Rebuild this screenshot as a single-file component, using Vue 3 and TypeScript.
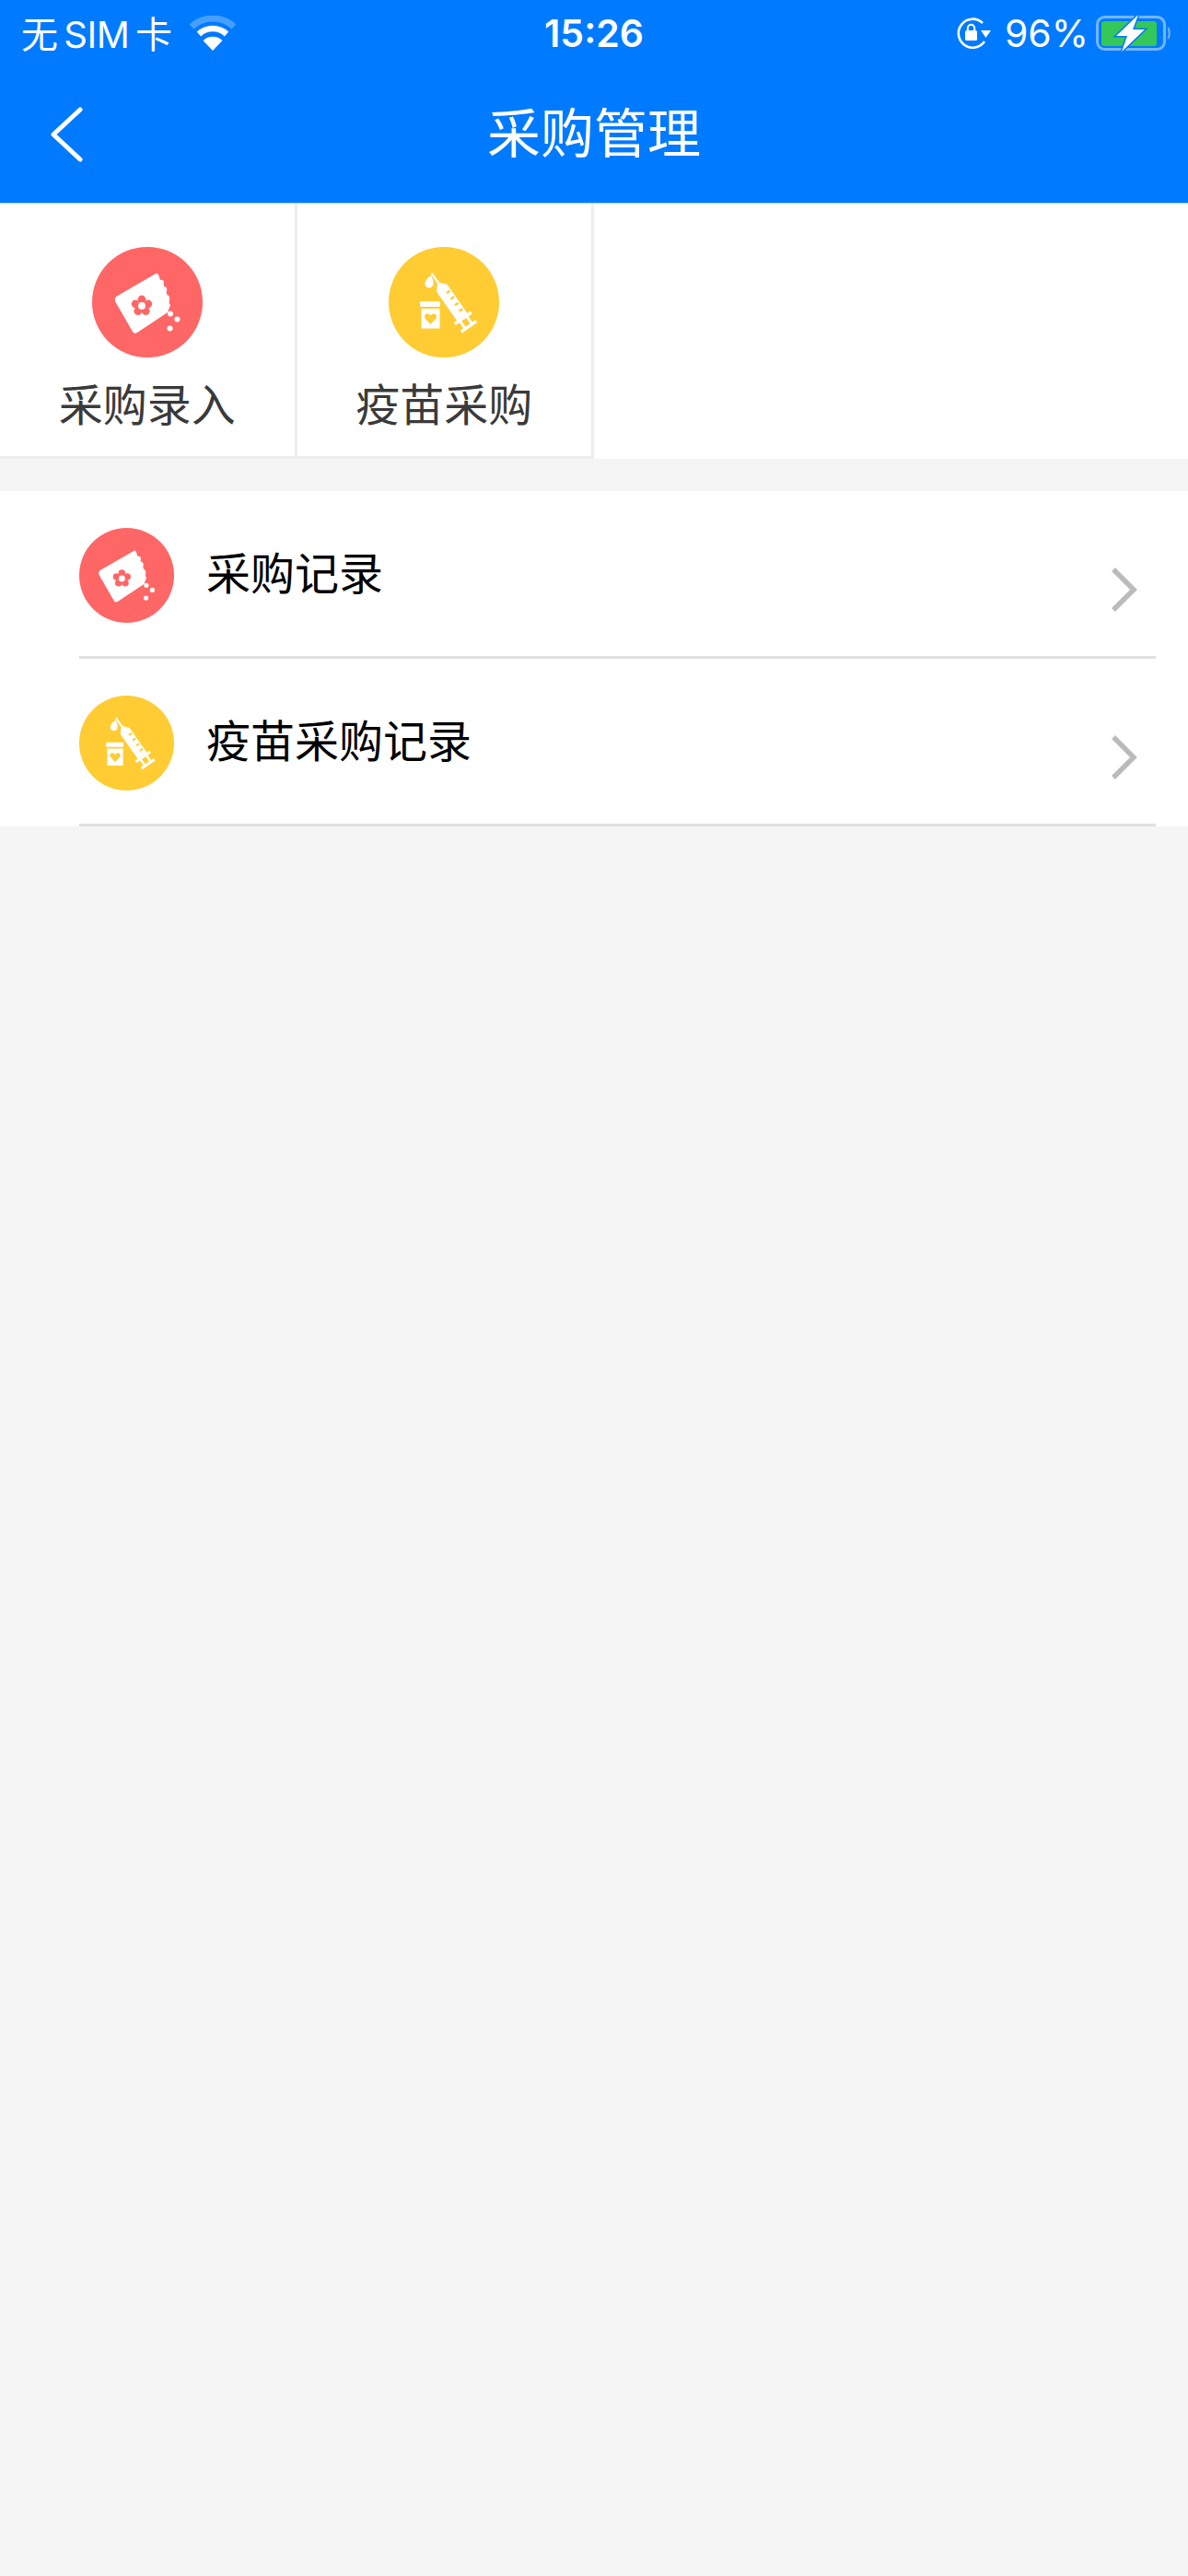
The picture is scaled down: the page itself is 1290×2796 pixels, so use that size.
<template>
    <div class="page">
        <svg class="defs" aria-hidden="true">
            <symbol id="icon-bag" viewBox="0 0 120 120">
                <circle cx="60" cy="60" r="60" fill="#ff6666" />
                <path
                    fill="#fff"
                    d="M26 54 L69 29 Q71 28 72 30 L74 36 Q78 35 78 39 Q77 42 79 43 Q82 44 81 48 Q80 51 82 52 Q85 54 84 58 Q83 61 85 63 L82 71 L49 93 Q46 95 44 92 L25 59 Q24 56 26 54 Z"
                />
                <g fill="#ff6666">
                    <circle cx="54" cy="57" r="4.4" />
                    <circle cx="60.8" cy="61.8" r="4.4" />
                    <circle cx="58.2" cy="69.6" r="4.4" />
                    <circle cx="49.8" cy="69.6" r="4.4" />
                    <circle cx="47.2" cy="61.8" r="4.4" />
                    <circle cx="54" cy="64" r="5" />
                </g>
                <circle cx="54" cy="64" r="4" fill="#fff" />
                <circle cx="85" cy="72.5" r="3" fill="#fff" />
                <circle cx="92.5" cy="78.5" r="3" fill="#fff" />
                <circle cx="84.5" cy="88.5" r="3" fill="#fff" />
            </symbol>
            <symbol id="icon-syringe" viewBox="0 0 120 120">
                <circle cx="60" cy="60" r="60" fill="#ffcc33" />
                <g transform="translate(70 62) rotate(-35)" fill="#fff">
                    <rect x="-1.2" y="-41" width="2.4" height="16" />
                    <path d="M-7 -21 L-2 -27 L2 -27 L7 -21 L7 17 L-7 17 Z" />
                    <rect x="-11" y="17" width="22" height="3.5" />
                    <rect x="-6" y="20" width="3" height="10" />
                    <rect x="3" y="20" width="3" height="10" />
                    <rect x="-10" y="28" width="20" height="3.5" />
                    <g fill="#ffcc33">
                        <rect x="1" y="-15" width="4.5" height="2.4" />
                        <rect x="1" y="-7" width="4.5" height="2.4" />
                        <rect x="1" y="1" width="4.5" height="2.4" />
                        <rect x="1" y="9" width="4.5" height="2.4" />
                    </g>
                </g>
                <path fill="#fff" d="M46 31 Q49 36 48.5 39 A4.6 4.6 0 1 1 39.5 39 Q41 34 46 31 Z" />
                <rect x="34" y="59" width="22" height="6" rx="1" fill="#fff" />
                <rect x="35.5" y="67" width="20" height="21.5" fill="#fff" />
                <path
                    fill="#ffcc33"
                    d="M45.5 84 L39.5 77.5 Q38 74 41 72.5 Q44 72 45.5 74.5 Q47 72 50 72.5 Q53 74 51.5 77.5 Z"
                />
            </symbol>
        </svg>

        <header class="header">
            <div class="status-bar">
                <div class="status-left">
                    <span class="carrier">无 SIM 卡</span>
                    <svg class="wifi" viewBox="0 0 52 38">
                        <path d="M3 12 A34 34 0 0 1 49 12" fill="none" stroke="#fff" stroke-opacity="0.28" stroke-width="7" />
                        <path d="M11 20 A22 22 0 0 1 41 20" fill="none" stroke="#fff" stroke-width="6.5" />
                        <path d="M26 38 L15.5 27 A15 15 0 0 1 36.5 27 Z" fill="#fff" />
                    </svg>
                </div>
                <div class="status-time">15:26</div>
                <div class="status-right">
                    <svg class="rotation" viewBox="0 0 38 36">
                        <path d="M29 7 A15.5 15.5 0 1 0 31 27" fill="none" stroke="#fff" stroke-width="2.6" />
                        <path d="M27 15 L38 15 L32.5 23 Z" fill="#fff" />
                        <rect x="10" y="15" width="13" height="11" rx="1.5" fill="#fff" />
                        <path d="M12.8 15 V12.5 A3.7 3.7 0 0 1 20.2 12.5 V15" fill="none" stroke="#fff" stroke-width="2" />
                    </svg>
                    <span class="battery-text">96%</span>
                    <svg class="battery" viewBox="0 0 82 40">
                        <rect x="1.5" y="2.5" width="73" height="35" rx="8" fill="none" stroke="#fff" stroke-opacity="0.45" stroke-width="3" />
                        <rect x="6" y="7" width="60" height="27" rx="3" fill="#34c759" />
                        <path d="M78.5 14 Q81 20 78.5 26" fill="none" stroke="#fff" stroke-opacity="0.45" stroke-width="2" />
                        <path d="M46 0 L22 23 L34 23 L28 40 L53 16 L40 16 Z" fill="#fff" stroke="#007aff" stroke-width="3" paint-order="stroke" />
                    </svg>
                </div>
            </div>
            <div class="nav-bar">
                <svg class="back" viewBox="0 0 36 60">
                    <path d="M33 3 L4 30 L33 57" fill="none" stroke="#fff" stroke-width="5" stroke-linecap="round" stroke-linejoin="round" />
                </svg>
                <h1 class="title">采购管理</h1>
            </div>
        </header>

        <section class="tiles">
            <div class="tile" v-for="tile in tiles" :key="tile.label">
                <svg class="tile-icon"><use :href="`#icon-${tile.icon}`" /></svg>
                <span class="tile-label">{{ tile.label }}</span>
            </div>
        </section>

        <section class="records">
            <div class="record" v-for="record in records" :key="record.label">
                <svg class="record-icon"><use :href="`#icon-${record.icon}`" /></svg>
                <span class="record-label">{{ record.label }}</span>
                <svg class="arrow" viewBox="0 0 30 50">
                    <path d="M3 3 L25 25 L3 47" fill="none" stroke="#bbbbbb" stroke-width="5.5" />
                </svg>
            </div>
        </section>
    </div>
</template>

<script setup lang="ts">
interface Entry {
    label: string;
    icon: 'bag' | 'syringe';
}

const tiles: Entry[] = [
    { label: '采购录入', icon: 'bag' },
    { label: '疫苗采购', icon: 'syringe' },
];

const records: Entry[] = [
    { label: '采购记录', icon: 'bag' },
    { label: '疫苗采购记录', icon: 'syringe' },
];
</script>

<style>
html,
body {
    margin: 0;
    background: #f5f5f5;
}
</style>

<style scoped>
.page {
    width: 1290px;
    min-height: 2796px;
    background: #f5f5f5;
    font-family: 'Liberation Sans', 'Noto Sans CJK SC', sans-serif;
}

.defs {
    display: none;
}

.header {
    background: #007aff;
    color: #fff;
    height: 220px;
    border-bottom: 1px solid #a5cfff;
}

.status-bar {
    height: 72px;
    display: grid;
    grid-template-columns: 1fr auto 1fr;
    align-items: center;
    padding: 0 18px;
    font-family: Inter, 'Noto Sans CJK SC', sans-serif;
    font-size: 40px;
}

.status-left {
    display: flex;
    align-items: center;
    gap: 18px;
    margin-left: 5px;
}

.carrier {
    margin-top: -3px;
    letter-spacing: -0.5px;
    word-spacing: -4px;
}

.wifi {
    width: 52px;
    height: 38px;
}

.status-time {
    font-size: 41px;
    font-weight: 600;
}

.status-right {
    display: flex;
    align-items: center;
    justify-content: flex-end;
}

.rotation {
    width: 38px;
    height: 36px;
    margin-right: 15px;
}

.battery-text {
    font-size: 41px;
    margin-right: 8px;
}

.battery {
    width: 82px;
    height: 40px;
}

.nav-bar {
    height: 148px;
    display: grid;
    grid-template-columns: 1fr auto 1fr;
    align-items: center;
    padding: 0 54px;
}

.back {
    width: 36px;
    height: 60px;
}

.title {
    margin: 0;
    font-size: 58px;
    font-weight: 400;
    line-height: 1;
}

.tiles {
    display: grid;
    grid-template-columns: repeat(4, 1fr);
    background: #fff;
}

.tile {
    height: 277px;
    padding-top: 47px;
    box-sizing: border-box;
    border-right: 3px solid #eeeeee;
    border-bottom: 3px solid #eeeeee;
    display: flex;
    flex-direction: column;
    align-items: center;
}

.tile-icon {
    width: 120px;
    height: 120px;
}

.tile-label {
    margin-top: 23px;
    font-size: 48px;
    line-height: 60px;
    color: #3a3a3a;
}

.records {
    margin-top: 35px;
    background: #fff;
}

.record {
    height: 182px;
    box-sizing: border-box;
    margin: 0 35px 0 86px;
    border-bottom: 3px solid #e0e0e0;
    display: flex;
    align-items: center;
}

.record-icon {
    width: 103px;
    height: 103px;
    margin-top: 3px;
}

.record-label {
    margin-left: 35px;
    margin-top: 2px;
    font-size: 48px;
    line-height: 60px;
    color: #000;
}

.arrow {
    width: 30px;
    height: 50px;
    margin-left: auto;
    margin-right: 19px;
    margin-top: 34px;
}
</style>
